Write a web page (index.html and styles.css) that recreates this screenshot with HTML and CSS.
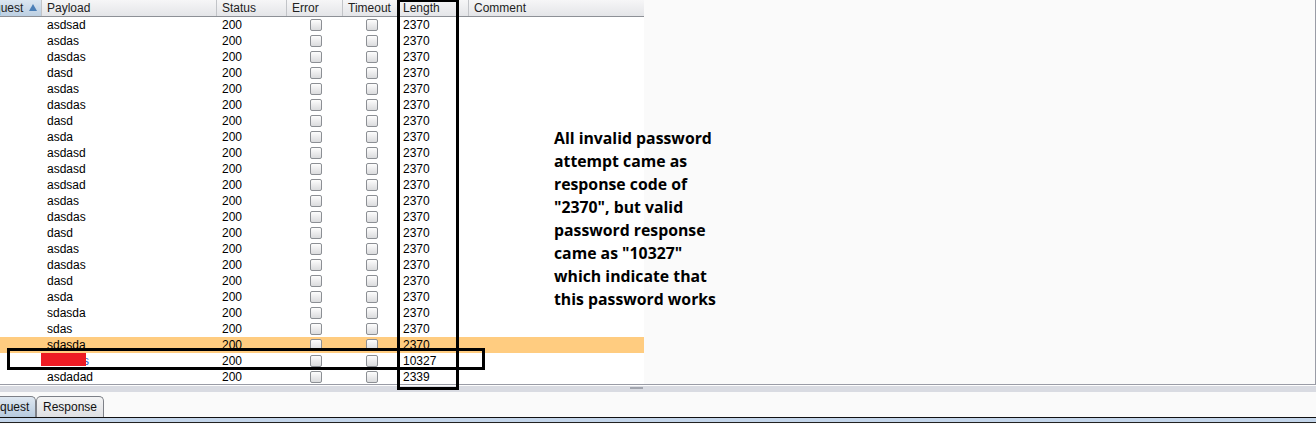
FILE: index.html
```html
<!DOCTYPE html>
<html>
<head>
<meta charset="utf-8">
<link rel="stylesheet" href="styles.css">
</head>
<body>
<div class="page">
  <div class="results">
    <div class="table">
      <div class="row head">
        <div class="hc sorted"><span class="cut">quest</span><span class="arrow"></span></div>
        <div class="hc">Payload</div>
        <div class="hc">Status</div>
        <div class="hc">Error</div>
        <div class="hc">Timeout</div>
        <div class="hc">Length</div>
        <div class="hc last">Comment</div>
      </div>
      <div class="body" id="rows"></div>
    </div>
    <div class="rest"></div>
  </div>
  <div class="splitter"><span class="grip"></span></div>
  <div class="tabs">
    <div class="tab sel">quest</div>
    <div class="tab">Response</div>
  </div>
  <div class="tabline"></div>

  <div class="box lenbox"></div>
  <div class="box rowbox"></div>
  <div class="redact"></div>
  <div class="note">All invalid password<br>attempt came as<br>response code of<br>"2370", but valid<br>password response<br>came as "10327"<br>which indicate that<br>this password works</div>
</div>
<script src="app.js"></script>
</body>
</html>
```
FILE: app.js
```js
const data = [
  ["asdsad","2370"],["asdas","2370"],["dasdas","2370"],["dasd","2370"],["asdas","2370"],
  ["dasdas","2370"],["dasd","2370"],["asda","2370"],["asdasd","2370"],["asdasd","2370"],
  ["asdsad","2370"],["asdas","2370"],["dasdas","2370"],["dasd","2370"],["asdas","2370"],
  ["dasdas","2370"],["dasd","2370"],["asda","2370"],["sdasda","2370"],["sdas","2370"],
  ["sdasda","2370","hl"],["xxxxxxs","10327","sel"],["asdadad","2339"]
];
const rows = document.getElementById("rows");
data.forEach(([p, len, cls]) => {
  const r = document.createElement("div");
  r.className = "row" + (cls ? " " + cls : "");
  r.innerHTML =
    '<div class="c"></div>' +
    '<div class="c pay">' + p + '</div>' +
    '<div class="c">200</div>' +
    '<div class="c cb"><span class="check"></span></div>' +
    '<div class="c cb"><span class="check"></span></div>' +
    '<div class="c">' + len + '</div>' +
    '<div class="c"></div>';
  rows.appendChild(r);
});
```
FILE: styles.css
```css
html, body {
  margin: 0;
  padding: 0;
  background: #fafafa;
}
body {
  font-family: "Liberation Sans", Arial, sans-serif;
  font-size: 12px;
  color: #000;
}
.page {
  position: relative;
  width: 1316px;
  height: 424px;
  overflow: hidden;
}
.results {
  display: flex;
  height: 384px;
  border-bottom: 1px solid #9a9ca6;
  overflow: hidden;
}
.table {
  width: 644px;
  background: #fff;
}
.rest {
  flex: 1;
  background: #fafafa;
  border-right: 1px solid #9a9ca6;
}
.row {
  display: grid;
  grid-template-columns: 42px 175px 70px 56px 55px 71px 175px;
  height: 16px;
  line-height: 16px;
}
.row.head {
  height: 16px;
  line-height: 16px;
  border-bottom: 1px solid #8d9096;
  background: linear-gradient(#f6f6f7, #e4e5e8);
}
.hc {
  padding-left: 5px;
  border-right: 1px solid #c2c4c8;
  color: #222;
  white-space: nowrap;
  overflow: hidden;
}
.hc.last { border-right: none; }
.hc.sorted {
  padding-left: 0;
  background: linear-gradient(#dbe6f1, #bccfe2);
  position: relative;
}
.cut {
  display: inline-block;
  margin-left: -6px;
}
.arrow {
  position: absolute;
  left: 29px;
  top: 4px;
  width: 0;
  height: 0;
  border-left: 4.5px solid transparent;
  border-right: 4.5px solid transparent;
  border-bottom: 7px solid #4b7fb7;
}
.c {
  padding-left: 5px;
  white-space: nowrap;
  overflow: hidden;
}
.cb {
  padding-left: 0;
  display: flex;
  justify-content: center;
  align-items: center;
}
.check {
  display: block;
  width: 10px;
  height: 10px;
  border: 1px solid #8c8f94;
  border-radius: 2px;
  background: linear-gradient(#fdfdfd, #dadbdd);
  margin-left: 2px;
}
.row.hl { background: #ffcc80; }
.row.sel .pay { color: #2859c9; }
.splitter {
  position: relative;
  height: 7px;
  border-top: 1px solid #fdfdfd;
  background: #d9dbe2;
  box-sizing: border-box;
}
.grip {
  position: absolute;
  left: 630px;
  top: 1px;
  width: 13px;
  height: 2px;
  background: #a2a5ae;
}
.tabs {
  display: flex;
  align-items: flex-end;
  height: 25px;
  box-sizing: border-box;
  background: #fafafa;
}
.tab {
  height: 21px;
  line-height: 21px;
  padding: 0 6px;
  border: 1px solid #7d8087;
  border-bottom: none;
  border-radius: 5px 5px 0 0;
  background: linear-gradient(#f4f4f5, #dfe0e3);
  box-sizing: border-box;
  color: #111;
  white-space: nowrap;
  overflow: hidden;
}
.tab.sel {
  width: 36px;
  padding-left: 0;
  border-left: none;
  border-radius: 0 5px 0 0;
  background: linear-gradient(#dfe8f1, #b6cade);
}
.tabline {
  height: 4px;
  border-top: 1px solid #111;
  border-bottom: 1px solid #222;
  background: #c3d5ea;
}
.box {
  position: absolute;
  border: 3px solid #000;
  box-sizing: border-box;
}
.lenbox {
  left: 397px;
  top: -1px;
  width: 62px;
  height: 391px;
}
.rowbox {
  left: 7px;
  top: 348px;
  width: 478px;
  height: 22px;
}
.redact {
  position: absolute;
  left: 41px;
  top: 353px;
  width: 45px;
  height: 13px;
  background: #ed1c24;
}
.note {
  position: absolute;
  left: 554px;
  top: 127px;
  font-family: "Open Sans", sans-serif;
  font-weight: bold;
  font-size: 15.8px;
  line-height: 23px;
  color: #000;
  white-space: nowrap;
}
```
